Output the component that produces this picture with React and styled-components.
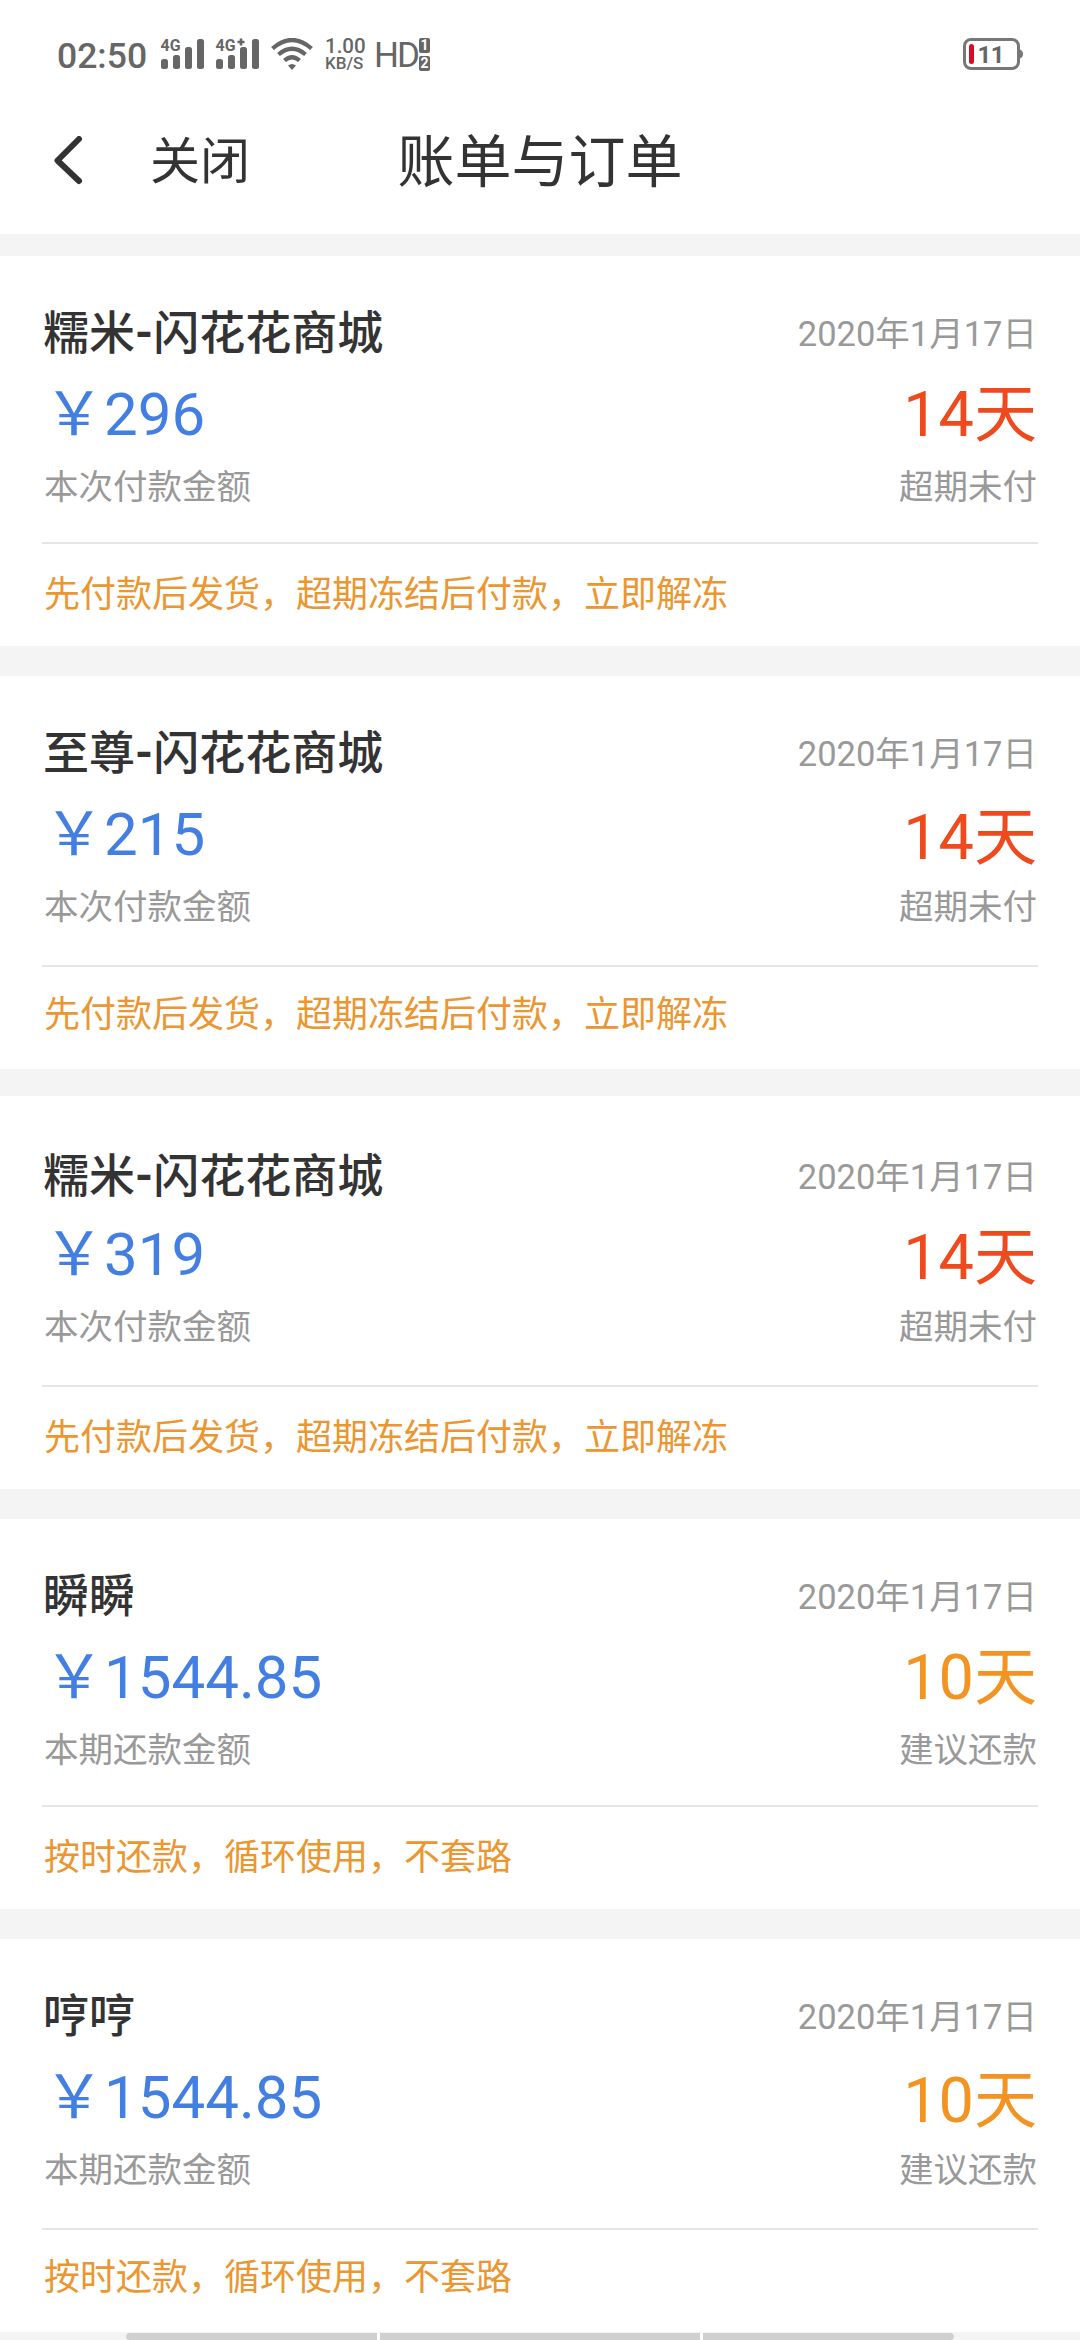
import React from 'react';
import styled, { createGlobalStyle } from 'styled-components';

const GlobalStyle = createGlobalStyle`
  * {
    box-sizing: border-box;
  }

  body {
    margin: 0;
    background: #f4f4f4;
    color: #333;
    font-family: Roboto, "Noto Sans CJK SC", sans-serif;
  }
`;

const Page = styled.div`
  width: 1080px;
  height: 2340px;
  overflow: hidden;
  display: flex;
  flex-direction: column;
  background: #f4f4f4;
`;

const TopArea = styled.header`
  height: 234px;
  margin-bottom: 22px;
  flex: none;
  background: #fff;
`;

const StatusBar = styled.div`
  height: 108px;
  padding: 0 57px;
  display: flex;
  align-items: center;
  justify-content: space-between;
  color: #666;
`;

const StatusGroup = styled.div`
  display: flex;
  align-items: center;
`;

const Clock = styled.span`
  width: 102px;
  padding-top: 3px;
  font-size: 35.5px;
  font-weight: 500;
  line-height: 40px;
`;

const StatusIcon = styled.svg`
  display: block;
  margin-right: ${props => props.$gap}px;
  font-family: Roboto, sans-serif;
`;

const NetSpeed = styled.div`
  width: 49px;
  padding-top: 1px;
  display: flex;
  flex-direction: column;
  font-size: 17px;
  font-weight: 500;
  line-height: 17px;

  span:first-child {
    font-size: 20.5px;
  }
`;

const HdLabel = styled.span`
  width: 45px;
  padding-top: 3px;
  font-size: 35px;
  line-height: 40px;
  letter-spacing: -2px;
`;

const SimBadges = styled.div`
  padding-top: 1px;
  display: flex;
  flex-direction: column;
  gap: 3px;
`;

const SimBadge = styled.span`
  width: 11px;
  height: 15px;
  border-radius: 2px;
  background: #666;
  color: #fff;
  font-size: 14px;
  font-weight: 700;
  line-height: 15px;
  text-align: center;
`;

const NavBar = styled.nav`
  height: 106px;
  padding: 0 50px;
  display: grid;
  grid-template-columns: 280px 1fr 280px;
  align-items: center;
`;

const NavLeft = styled.div`
  display: flex;
  align-items: center;
  gap: 64px;
`;

const CloseText = styled.span`
  padding-top: 2px;
  font-size: 50px;
  line-height: 60px;
`;

const NavTitle = styled.h1`
  margin: 0;
  padding-top: 4px;
  font-size: 57px;
  font-weight: 400;
  line-height: 60px;
  text-align: center;
  white-space: nowrap;
`;

const BillCard = styled.section`
  height: ${props => props.$height}px;
  margin-bottom: ${props => props.$gap}px;
  padding: 0 42px;
  flex: none;
  background: #fff;
`;

const Summary = styled.div`
  height: ${props => props.$height}px;
  display: flex;
  justify-content: space-between;
  border-bottom: 2px solid #e6e6e6;
`;

const Column = styled.div`
  padding: 0 1px 0 2px;
  display: flex;
  flex-direction: column;
  align-items: ${props => (props.$right ? 'flex-end' : 'flex-start')};
`;

const ShopName = styled.h2`
  height: 117px;
  margin: 0 0 0 -1px;
  padding-top: ${props => 45 + props.$shift}px;
  font-size: 46px;
  font-weight: 500;
  line-height: 64px;
`;

const Dash = styled.span`
  font-weight: 700;
`;

const DueDate = styled.span`
  height: 117px;
  padding-top: ${props => 54 + props.$shift}px;
  color: #999;
  font-size: 34.5px;
  line-height: 48px;
`;

const Amount = styled.span`
  height: 88px;
  padding-top: 7px;
  color: #437fe3;
  font-size: 60px;
  line-height: 70px;
`;

const Days = styled.span`
  height: 88px;
  padding-top: ${props => 7 + props.$shift}px;
  color: ${props => (props.$overdue ? '#ee4a1e' : '#f29322')};
  font-size: 63px;
  line-height: 70px;
`;

const Label = styled.span`
  padding-top: 2px;
  color: #999;
  font-size: 34.5px;
  line-height: 48px;
`;

const Note = styled.p`
  margin: 0;
  padding: ${props => props.$top}px 2px 0;
  color: #eb9630;
  font-size: 36px;
  line-height: 50px;
`;

const HomeHints = styled.div`
  width: 828px;
  margin: 1px auto 0;
  display: grid;
  grid-template-columns: 251px 320px 251px;
  gap: 3px;
  border-radius: 4px;
  overflow: hidden;
  background: #fff;
`;

const Hint = styled.span`
  height: 7px;
  background: #d0d0d0;
`;

const SignalIcon = ({ label, gap }) => (
  <StatusIcon $gap={gap} width="47" height="44" viewBox="-2 -6 47 44" fill="#666">
    <rect x="0" y="21" width="7" height="10" rx="2.5" />
    <rect x="12" y="17" width="7" height="14" rx="2.5" />
    <rect x="24" y="9" width="7" height="22" rx="2.5" />
    <rect x="36" y="1" width="7" height="30" rx="2.5" />
    <text x="-0.5" y="13" fontSize="17" fontWeight="700" textLength="20" lengthAdjust="spacingAndGlyphs">4G</text>
    {label === '4G+' && <path d="M21.5 4h7M25 .5v7" stroke="#666" strokeWidth="2.6" />}
  </StatusIcon>
);

const WifiIcon = () => (
  <StatusIcon $gap={12} width="42" height="32" viewBox="0 0 42 32" fill="none" stroke="#666" strokeWidth="4.2">
    <path d="M1.5 10.5Q21-6.5 40.5 10.5" />
    <path d="M7.5 16.5Q21 5 34.5 16.5" />
    <path d="M13.5 22.5Q21 16 28.5 22.5" />
    <path d="M17 27.5Q21 24.5 25 27.5L21 32Z" fill="#666" stroke="none" />
  </StatusIcon>
);

const BatteryIcon = () => (
  <StatusIcon $gap={0} width="60" height="32" viewBox="0 0 60 32">
    <rect x="1.5" y="1.5" width="54" height="29" rx="6.5" fill="none" stroke="#777" strokeWidth="3" />
    <path d="M57 11.5Q60 13 60 16T57 20.5Z" fill="#777" />
    <rect x="6" y="6" width="5" height="20" rx="2.5" fill="#dc0a28" />
    <text x="14.5" y="24.5" fontSize="24" fontWeight="700" fill="#666" textLength="27">11</text>
  </StatusIcon>
);

const BackIcon = () => (
  <svg width="36" height="50" viewBox="0 0 36 50" fill="none">
    <path d="M29 3L7.5 24.5L29 45" stroke="#333" strokeWidth="6" strokeLinecap="round" strokeLinejoin="round" />
  </svg>
);

// brand and mall are joined by a heavier dash
const BillName = ({ name, shift }) => {
  const [brand, mall] = name.split('-');
  return (
    <ShopName $shift={shift}>
      {brand}
      {mall && <Dash>-</Dash>}
      {mall}
    </ShopName>
  );
};

// shift: small vertical offsets in px
const bills = [
  {
    id: 1, name: '糯米-闪花花商城', amount: '296', days: 14, overdue: true,
    label: '本次付款金额', status: '超期未付', note: '先付款后发货，超期冻结后付款，立即解冻',
    height: 390, gap: 30, line: 288, shift: { head: 0, days: 0, note: 0 }
  },
  {
    id: 2, name: '至尊-闪花花商城', amount: '215', days: 14, overdue: true,
    label: '本次付款金额', status: '超期未付', note: '先付款后发货，超期冻结后付款，立即解冻',
    height: 393, gap: 27, line: 291, shift: { head: 0, days: 3, note: 0 }
  },
  {
    id: 3, name: '糯米-闪花花商城', amount: '319', days: 14, overdue: true,
    label: '本次付款金额', status: '超期未付', note: '先付款后发货，超期冻结后付款，立即解冻',
    height: 393, gap: 30, line: 291, shift: { head: 3, days: 3, note: 3 }
  },
  {
    id: 4, name: '瞬瞬', amount: '1544.85', days: 10, overdue: false,
    label: '本期还款金额', status: '建议还款', note: '按时还款，循环使用，不套路',
    height: 390, gap: 30, line: 288, shift: { head: 0, days: 0, note: 0 }
  },
  {
    id: 5, name: '哼哼', amount: '1544.85', days: 10, overdue: false,
    label: '本期还款金额', status: '建议还款', note: '按时还款，循环使用，不套路',
    height: 393, gap: 0, line: 291, shift: { head: 0, days: 3, note: 0 }
  }
];

const App = () => {
  return (
    <Page>
      <GlobalStyle />
      <TopArea>
        <StatusBar>
          <StatusGroup>
            <Clock>02:50</Clock>
            <SignalIcon label="4G" gap={8} />
            <SignalIcon label="4G+" gap={10} />
            <WifiIcon />
            <NetSpeed>
              <span>1.00</span>
              <span>KB/S</span>
            </NetSpeed>
            <HdLabel>HD</HdLabel>
            <SimBadges>
              <SimBadge>1</SimBadge>
              <SimBadge>2</SimBadge>
            </SimBadges>
          </StatusGroup>
          <BatteryIcon />
        </StatusBar>
        <NavBar>
          <NavLeft>
            <BackIcon />
            <CloseText>关闭</CloseText>
          </NavLeft>
          <NavTitle>账单与订单</NavTitle>
        </NavBar>
      </TopArea>

      {bills.map(bill => (
        <BillCard key={bill.id} $height={bill.height} $gap={bill.gap}>
          <Summary $height={bill.line}>
            <Column>
              <BillName name={bill.name} shift={bill.shift.head} />
              <Amount>￥{bill.amount}</Amount>
              <Label>{bill.label}</Label>
            </Column>
            <Column $right>
              <DueDate $shift={bill.shift.head}>2020年1月17日</DueDate>
              <Days $overdue={bill.overdue} $shift={bill.shift.days}>{bill.days}天</Days>
              <Label>{bill.status}</Label>
            </Column>
          </Summary>
          <Note $top={314 + bill.shift.note - bill.line}>{bill.note}</Note>
        </BillCard>
      ))}

      <HomeHints>
        <Hint />
        <Hint />
        <Hint />
      </HomeHints>
    </Page>
  );
};

export default App;
